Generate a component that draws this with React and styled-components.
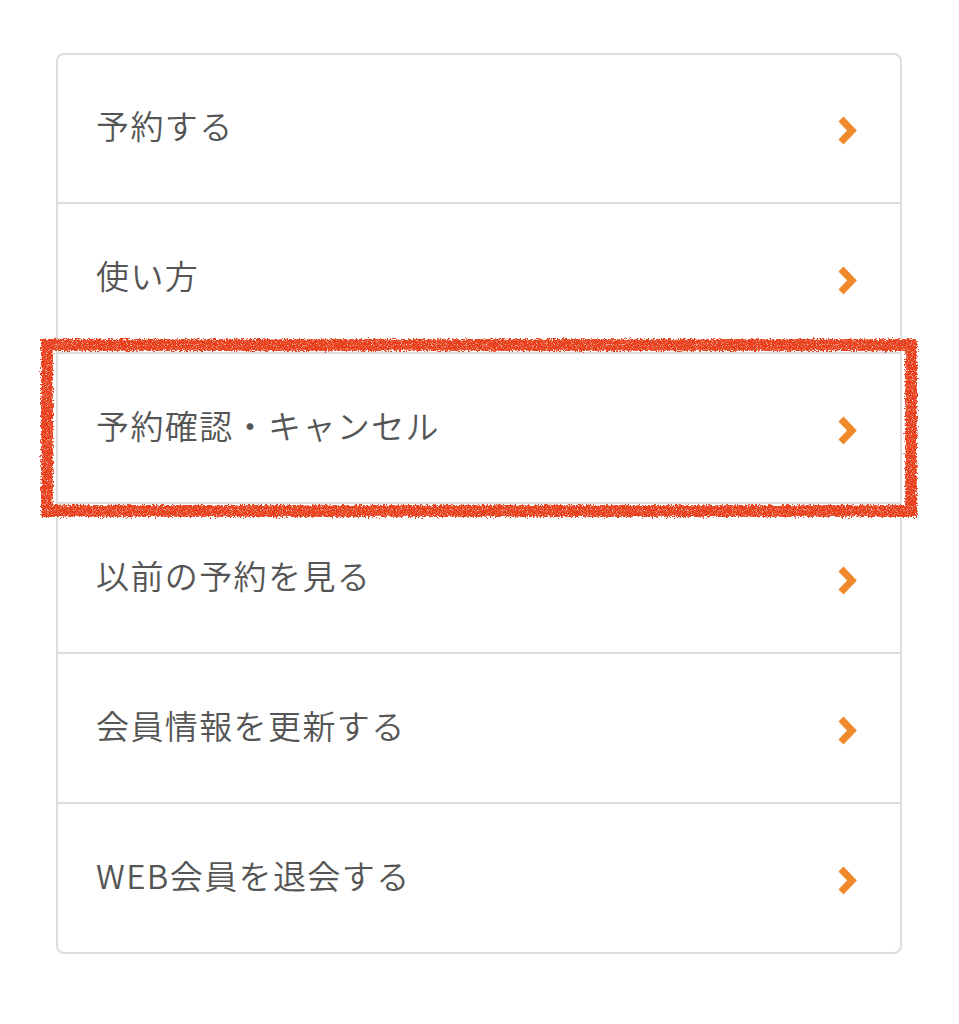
import React from "react";
import styled, { createGlobalStyle } from "styled-components";

const Global = createGlobalStyle`
  html, body { margin: 0; padding: 0; background: #ffffff; }
  body { font-family: "Noto Sans CJK JP", "Noto Sans", sans-serif; }
`;

const Page = styled.div`
  width: 959px;
  min-height: 1024px;
  padding: 53px 0 0 56px;
  box-sizing: border-box;
`;

const Card = styled.ul`
  list-style: none;
  margin: 0;
  padding: 0;
  width: 846px;
  box-sizing: border-box;
  border: 2px solid #dddddd;
  border-radius: 8px;
  background: #ffffff;
`;

const Row = styled.li`
  position: relative;
  display: flex;
  align-items: center;
  justify-content: space-between;
  height: ${(p) => (p.$first ? 147 : 150)}px;
  box-sizing: border-box;
  padding: 0 41px 0 38px;
  border-top: ${(p) => (p.$first ? "none" : "2px solid #dddddd")};
  cursor: pointer;
`;

const Label = styled.span`
  font-family: "Noto Sans CJK JP", "Noto Sans", sans-serif;
  font-size: 33px;
  font-weight: 350;
  letter-spacing: 1.4px;
  color: #555555;
  line-height: 1;
  margin-bottom: 6px;
`;

const ChevronBox = styled.svg`
  display: block;
  width: 22px;
  height: 31px;
  flex-shrink: 0;
  margin-top: 4px;
`;

const Highlight = styled.svg`
  position: absolute;
  left: -18px;
  top: -16px;
  width: 878px;
  height: 180px;
  pointer-events: none;
  overflow: visible;
`;

const Chevron = () => (
  <ChevronBox viewBox="0 0 22 31" aria-hidden="true">
    <polyline
      points="4,4 15,15.5 4,27"
      fill="none"
      stroke="#f0892b"
      strokeWidth="7"
      strokeLinejoin="miter"
      strokeLinecap="butt"
    />
  </ChevronBox>
);

const CrayonFrame = () => (
  <Highlight viewBox="0 0 878 180" aria-hidden="true">
    <defs>
      <filter id="crayon" x="-5%" y="-10%" width="110%" height="120%">
        <feTurbulence type="fractalNoise" baseFrequency="0.6" numOctaves="3" seed="3" result="noise" />
        <feDisplacementMap in="SourceGraphic" in2="noise" scale="6" xChannelSelector="R" yChannelSelector="G" result="disp" />
        <feTurbulence type="fractalNoise" baseFrequency="1.2" numOctaves="1" seed="8" result="grain" />
        <feColorMatrix
          in="grain"
          type="matrix"
          values="0 0 0 0 0  0 0 0 0 0  0 0 0 0 0  0 0 0 -3 2.6"
          result="grainAlpha"
        />
        <feComposite in="disp" in2="grainAlpha" operator="in" />
      </filter>
    </defs>
    <rect
      x="7"
      y="7"
      width="864"
      height="166"
      fill="none"
      stroke="#e8411d"
      strokeWidth="12"
      filter="url(#crayon)"
    />
  </Highlight>
);

const items = [
  "予約する",
  "使い方",
  "予約確認・キャンセル",
  "以前の予約を見る",
  "会員情報を更新する",
  "WEB会員を退会する",
];

export default function App() {
  return (
    <Page>
      <Global />
      <Card>
        {items.map((label, i) => (
          <Row key={label} $first={i === 0}>
            <Label>{label}</Label>
            <Chevron />
            {i === 2 && <CrayonFrame />}
          </Row>
        ))}
      </Card>
    </Page>
  );
}
